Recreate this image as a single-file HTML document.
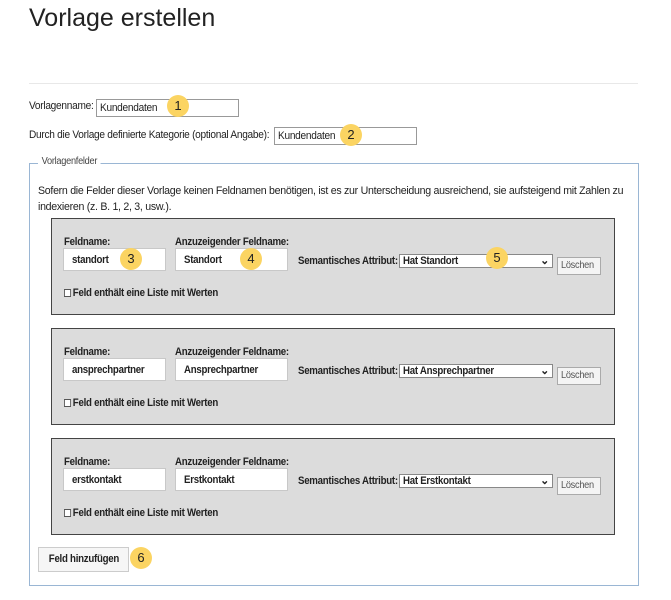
<!DOCTYPE html>
<html><head><meta charset="utf-8"><style>
*{box-sizing:border-box;margin:0;padding:0}
body{width:671px;height:600px;background:#fff;font-family:"Liberation Sans",sans-serif;color:#222;position:relative;overflow:hidden;font-size:11px;letter-spacing:-0.3px}
.a{position:absolute;white-space:nowrap;transform-origin:left center}
.n{transform:scaleX(0.92)}
.bb{transform:scaleX(0.88)}
.t{display:inline-block;transform-origin:left center;white-space:nowrap}
h1{position:absolute;left:29px;top:4px;font-size:25px;font-weight:normal;color:#222;letter-spacing:0}
.inp{position:absolute;border:1px solid #999;background:#fff;padding:0 3px;font-size:11px;line-height:16px;white-space:nowrap;overflow:hidden}
.fi{position:absolute;border:1px solid #c8c8c8;background:#fff;font-weight:bold;padding:0 8px;font-size:11px;line-height:22px;white-space:nowrap}
.badge{position:absolute;width:22px;height:22px;border-radius:50%;background:#fbd462;text-align:center;line-height:22px;font-size:13px;color:#222;letter-spacing:0}
.box{position:absolute;left:51px;width:564px;height:97px;background:#dcdcdc;border:1px solid #444}
.b{font-weight:bold}
.sel{position:absolute;border:1px solid #888;background:#fff;font-weight:bold;padding:0 3px;line-height:12px;font-size:11px;height:14px;white-space:nowrap}
.btn{position:absolute;border:1px solid #aaa;background:#f4f4f4;color:#555;font-size:10px;text-align:center;line-height:15px;white-space:nowrap}
.cb{display:inline-block;width:8px;height:8px;border:1px solid #555;background:#fff;vertical-align:-1px;margin-right:2px}
</style></head><body>
<h1>Vorlage erstellen</h1>
<div class="a" style="left:29px;top:83px;width:609px;height:1px;background:#e8e8e8"></div>
<div class="a n" style="left:29px;top:100px">Vorlagenname:</div>
<div class="inp" style="left:96px;top:99px;width:143px;height:18px"><span class="t n">Kundendaten</span></div>
<div class="badge" style="left:167px;top:95px">1</div>
<div class="a n" style="left:29px;top:129px">Durch die Vorlage definierte Kategorie (optional Angabe):</div>
<div class="inp" style="left:274px;top:127px;width:143px;height:18px"><span class="t n">Kundendaten</span></div>
<div class="badge" style="left:340px;top:124px">2</div>
<div class="a" style="left:29px;top:163px;width:610px;height:423px;border:1px solid #9ab6d4"></div>
<div class="a n" style="left:38px;top:156px;background:#fff;padding:0 4px;font-size:10px;color:#444">Vorlagenfelder</div>
<div class="a" style="left:38px;top:183px;line-height:16px;transform:scaleX(0.965)">Sofern die Felder dieser Vorlage keinen Feldnamen benötigen, ist es zur Unterscheidung ausreichend, sie aufsteigend mit Zahlen zu<br>indexieren (z. B. 1, 2, 3, usw.).</div>

<div class="box" style="top:218px"></div>
<div class="box" style="top:328px"></div>
<div class="box" style="top:438px"></div>

<div class="a b bb" style="left:64px;top:236px">Feldname:</div>
<div class="a b bb" style="left:175px;top:236px">Anzuzeigender Feldname:</div>
<div class="fi" style="left:63px;top:248px;width:103px;height:23px"><span class="t bb">standort</span></div>
<div class="fi" style="left:175px;top:248px;width:113px;height:23px"><span class="t bb">Standort</span></div>
<div class="a b bb" style="left:298px;top:255px">Semantisches Attribut:</div>
<div class="sel" style="left:399px;top:254px;width:154px"><span class="t bb">Hat Standort</span><span style="position:absolute;right:3px;top:0">⌄</span></div>
<div class="btn" style="left:557px;top:257px;width:44px;height:18px"><span class="t n">Löschen</span></div>
<div class="a b bb" style="left:64px;top:287px"><span class="cb"></span>Feld enthält eine Liste mit Werten</div>
<div class="badge" style="left:120px;top:248px">3</div>
<div class="badge" style="left:240px;top:248px">4</div>
<div class="badge" style="left:486px;top:247px">5</div>

<div class="a b bb" style="left:64px;top:346px">Feldname:</div>
<div class="a b bb" style="left:175px;top:346px">Anzuzeigender Feldname:</div>
<div class="fi" style="left:63px;top:358px;width:103px;height:23px"><span class="t bb">ansprechpartner</span></div>
<div class="fi" style="left:175px;top:358px;width:113px;height:23px"><span class="t bb">Ansprechpartner</span></div>
<div class="a b bb" style="left:298px;top:365px">Semantisches Attribut:</div>
<div class="sel" style="left:399px;top:364px;width:154px"><span class="t bb">Hat Ansprechpartner</span><span style="position:absolute;right:3px;top:0">⌄</span></div>
<div class="btn" style="left:557px;top:367px;width:44px;height:18px"><span class="t n">Löschen</span></div>
<div class="a b bb" style="left:64px;top:397px"><span class="cb"></span>Feld enthält eine Liste mit Werten</div>

<div class="a b bb" style="left:64px;top:456px">Feldname:</div>
<div class="a b bb" style="left:175px;top:456px">Anzuzeigender Feldname:</div>
<div class="fi" style="left:63px;top:468px;width:103px;height:23px"><span class="t bb">erstkontakt</span></div>
<div class="fi" style="left:175px;top:468px;width:113px;height:23px"><span class="t bb">Erstkontakt</span></div>
<div class="a b bb" style="left:298px;top:475px">Semantisches Attribut:</div>
<div class="sel" style="left:399px;top:474px;width:154px"><span class="t bb">Hat Erstkontakt</span><span style="position:absolute;right:3px;top:0">⌄</span></div>
<div class="btn" style="left:557px;top:477px;width:44px;height:18px"><span class="t n">Löschen</span></div>
<div class="a b bb" style="left:64px;top:507px"><span class="cb"></span>Feld enthält eine Liste mit Werten</div>

<div class="btn b" style="left:38px;top:547px;width:91px;height:25px;line-height:23px;color:#222;font-size:11px;border-color:#ccc;background:#f6f6f6"><span class="t bb" style="transform-origin:center">Feld hinzufügen</span></div>
<div class="badge" style="left:130px;top:547px">6</div>
</body></html>
